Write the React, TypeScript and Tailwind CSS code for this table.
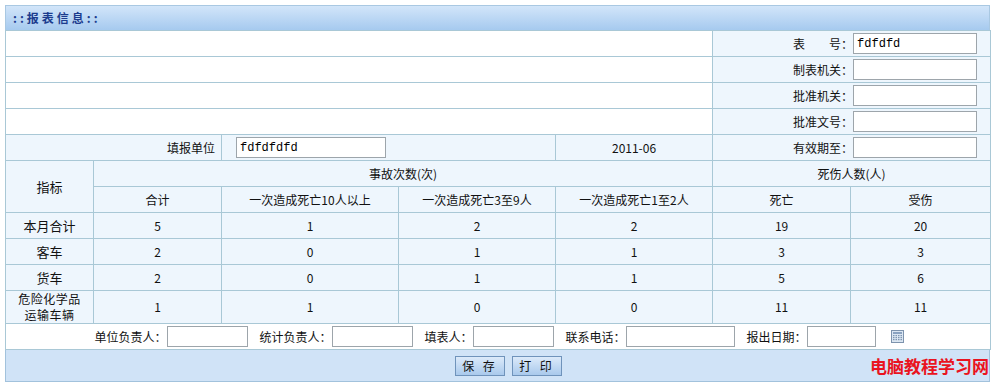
import React from 'react';

const cjk = "font-['SimSun','Noto_Sans_CJK_SC',sans-serif]";
const line = 'border border-[#a9c8d6]';
const cellBg = 'bg-[#eef6fd]';

function TextInput({ value = '', className = '' }: { value?: string; className?: string }) {
  return (
    <input
      readOnly
      value={value}
      className={`h-[21px] border border-[#9da5ab] bg-white px-[3px] font-['Liberation_Mono',monospace] text-[12px] text-black outline-none ${className}`}
    />
  );
}

function CalendarIcon() {
  return (
    <svg width="13" height="13" viewBox="0 0 13 13" className="block">
      <rect x="0.5" y="0.5" width="12" height="12" fill="#dbe6f2" stroke="#7d93ad" />
      <rect x="2" y="2" width="9" height="2" fill="#8aa2c0" />
      {[5, 7, 9].map((y) =>
        [2, 4.5, 7, 9.5].map((x) => <rect key={`${x}-${y}`} x={x} y={y} width="1.5" height="1.2" fill="#7f95b1" />)
      )}
    </svg>
  );
}

const topRows = [
  { label: '表\u3000\u3000号：', value: 'fdfdfd' },
  { label: '制表机关：', value: '' },
  { label: '批准机关：', value: '' },
  { label: '批准文号：', value: '' },
];

const dataRows = [
  { name: '本月合计', v: [5, 1, 2, 2, 19, 20] },
  { name: '客车', v: [2, 0, 1, 1, 3, 3] },
  { name: '货车', v: [2, 0, 1, 1, 5, 6] },
];

const footerFields = [
  { label: '单位负责人：', w: 'w-[81px]' },
  { label: '统计负责人：', w: 'w-[81px]' },
  { label: '填表人：', w: 'w-[81px]' },
  { label: '联系电话：', w: 'w-[109px]' },
  { label: '报出日期：', w: 'w-[69px]' },
];

export default function App() {
  return (
    <div className={`relative min-h-[388px] bg-white pl-[5px] pt-[5px] text-[12px] text-[#111] ${cjk}`}>
      <div className="w-[985px]">
        <div className="flex h-[25px] items-center border border-b-0 border-[#a9c8e2] bg-gradient-to-b from-[#d2e5f9] to-[#a6caef] pl-[7px] font-bold tracking-[3px] text-[#1c3c8e]">
          ::报表信息::
        </div>

        <table className="w-[985px] table-fixed border-collapse">
          <colgroup>
            <col className="w-[88px]" />
            <col className="w-[128px]" />
            <col className="w-[177px]" />
            <col className="w-[157px]" />
            <col className="w-[157px]" />
            <col className="w-[138px]" />
            <col className="w-[140px]" />
          </colgroup>
          <tbody>
            {topRows.map((r) => (
              <tr key={r.label} className="h-[26px]">
                <td colSpan={5} className={`${line} bg-white`} />
                <td colSpan={2} className={`${line} ${cellBg} pr-[13px] text-right`}>
                  <span className="align-middle">{r.label}</span>
                  <TextInput value={r.value} className="w-[124px] align-middle" />
                </td>
              </tr>
            ))}

            <tr className={`h-[26px] ${cellBg}`}>
              <td colSpan={2} className={`${line} pr-[6px] text-right`}>填报单位</td>
              <td colSpan={2} className={`${line} pl-[14px]`}>
                <TextInput value="fdfdfdfd" className="w-[150px] align-middle" />
              </td>
              <td className={`${line} text-center`}>2011-06</td>
              <td colSpan={2} className={`${line} pr-[13px] text-right`}>
                <span className="align-middle">有效期至：</span>
                <TextInput className="w-[124px] align-middle" />
              </td>
            </tr>

            <tr className={`h-[26px] ${cellBg}`}>
              <td rowSpan={2} className={`${line} text-center text-[13px]`}>指标</td>
              <td colSpan={4} className={`${line} text-center`}>事故次数(次)</td>
              <td colSpan={2} className={`${line} text-center`}>死伤人数(人)</td>
            </tr>
            <tr className={`h-[26px] ${cellBg}`}>
              {['合计', '一次造成死亡10人以上', '一次造成死亡3至9人', '一次造成死亡1至2人', '死亡', '受伤'].map((h) => (
                <td key={h} className={`${line} text-center`}>{h}</td>
              ))}
            </tr>

            {dataRows.map((r) => (
              <tr key={r.name} className={`h-[26px] ${cellBg}`}>
                <td className={`${line} text-center text-[13px]`}>{r.name}</td>
                {r.v.map((n, i) => (
                  <td key={i} className={`${line} text-center`}>{n}</td>
                ))}
              </tr>
            ))}
            <tr className={`h-[33px] ${cellBg}`}>
              <td className={`${line} py-0 text-center text-[12px] leading-[16px] tracking-[0.5px]`}>
                <div>危险化学品</div>
                <div>运输车辆</div>
              </td>
              {[1, 1, 0, 0, 11, 11].map((n, i) => (
                <td key={i} className={`${line} text-center`}>{n}</td>
              ))}
            </tr>

            <tr className="h-[26px] bg-white">
              <td colSpan={7} className={line}>
                <div className="flex items-center justify-center gap-[12px] pl-[2px]">
                  {footerFields.map((f) => (
                    <div key={f.label} className="flex items-center">
                      <span>{f.label}</span>
                      <TextInput className={f.w} />
                    </div>
                  ))}
                  <span className="ml-[3px]">
                    <CalendarIcon />
                  </span>
                </div>
              </td>
            </tr>
          </tbody>
        </table>

        <div className="flex h-[32px] items-center justify-center gap-[7px] border border-t-0 border-[#a2c2dc] bg-[#d0e3f7] pl-[22px]">
          {['保 存', '打 印'].map((b) => (
            <button
              key={b}
              className="h-[20px] w-[50px] border border-[#6f93bb] bg-gradient-to-b from-[#dceafa] to-[#a9c9ec] text-[12px] tracking-[3px] text-[#111]"
            >
              {b}
            </button>
          ))}
        </div>
      </div>

      <div className="absolute left-[870px] top-[356px] text-[17px] font-bold leading-[20px] text-[#ea1320]">
        电脑教程学习网
      </div>
    </div>
  );
}
